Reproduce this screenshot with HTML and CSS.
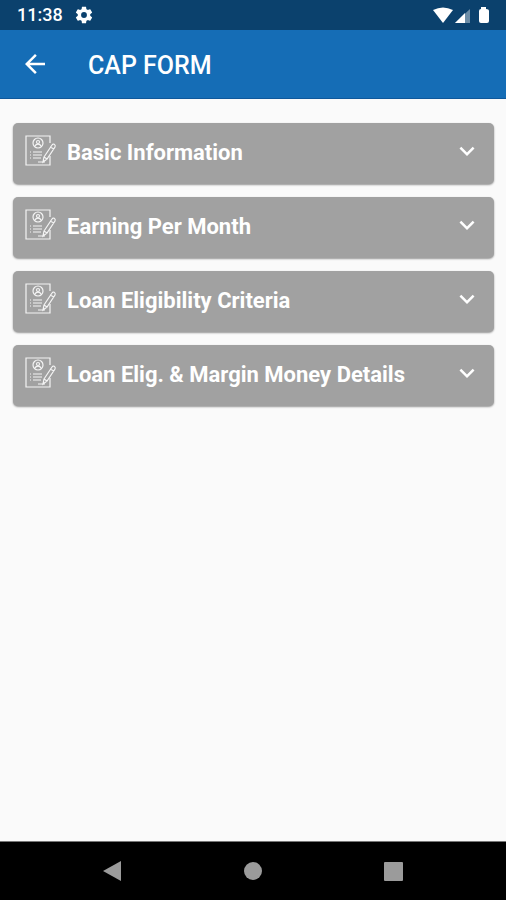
FILE: index.html
```html
<!DOCTYPE html>
<html lang="en">
<head>
  <meta charset="UTF-8">
  <meta name="viewport" content="width=device-width, initial-scale=1">
  <title>CAP FORM</title>
  <link rel="stylesheet" href="styles.css">
</head>

<body>

  <svg class="sprite" aria-hidden="true">
    <symbol id="icon-form" viewBox="0 0 32 32">
      <path d="M25 9V2H1v29h24v-9" />
      <circle cx="13" cy="9" r="5" />
      <circle cx="13" cy="8" r="1.5" />
      <path d="M10 12c1-2.500 5-2.500 6 0" />
      <path d="M5 18h1M8 18h9M5 21h1M8 21h9M5 24h1M8 24h8M13 28h7" />
      <path d="M19 23l8-12c1-2 4-.5 3 2l-8 12-4 3zM25 13l4 2M19 23l3 2" />
    </symbol>
    <symbol id="icon-chevron" viewBox="0 0 24 24">
      <path d="M7.410 8.590L12 13.170l4.590-4.580L18 10l-6 6-6-6z" />
    </symbol>
  </svg>

  <div class="status-bar">
    <span class="clock">11:38</span>
    <svg class="gear" viewBox="0 0 24 24" aria-hidden="true">
      <path d="M19.430 12.980c.04-.32.07-.64.07-.98s-.03-.66-.07-.98l2.110-1.650c.19-.15.24-.42.12-.64l-2-3.460c-.12-.22-.39-.3-.61-.22l-2.490 1c-.52-.4-1.080-.73-1.690-.98l-.38-2.650C14.460 2.180 14.250 2 14 2h-4c-.25 0-.46.18-.49.42l-.38 2.650c-.61.25-1.170.59-1.690.98l-2.490-1c-.23-.09-.49 0-.61.22l-2 3.460c-.13.22-.07.49.12.64l2.110 1.650c-.04.32-.07.65-.07.98s.03.66.07.98l-2.110 1.650c-.19.15-.24.42-.12.64l2 3.460c.12.22.39.3.61.22l2.490-1c.52.4 1.080.73 1.690.98l.38 2.650c.03.24.24.42.49.42h4c.25 0 .46-.18.49-.42l.38-2.650c.61-.25 1.170-.59 1.690-.98l2.490 1c.23.09.49 0 .61-.22l2-3.460c.12-.22.07-.49-.12-.64zM12 15.500a3.500 3.500 0 1 1 0-7 3.500 3.500 0 0 1 0 7z" />
    </svg>
    <svg class="signals" viewBox="0 0 60 18" aria-hidden="true">
      <path d="M1 4Q11-1 21 4L11 17z" />
      <path d="M38 3v14H23z" opacity=".4" />
      <path d="M33 7v10H23z" />
      <path d="M49 3V1h5v2q3 0 3 2v10q0 2-2 2h-6q-2 0-2-2V5q0-2 2-2z" />
    </svg>
  </div>

  <header class="app-bar">
    <a class="back" href="#" aria-label="Back">
      <svg viewBox="0 0 24 24" aria-hidden="true">
        <path d="M20 11H7.830l5.590-5.590L12 4l-8 8 8 8 1.410-1.410L7.830 13H20z" />
      </svg>
    </a>
    <h1>CAP FORM</h1>
  </header>

  <main class="sections">
    <button class="section" type="button" aria-expanded="false">
      <svg class="form-icon" aria-hidden="true"><use href="#icon-form" /></svg>
      <span class="label">Basic Information</span>
      <svg class="chevron" aria-hidden="true"><use href="#icon-chevron" /></svg>
    </button>
    <button class="section" type="button" aria-expanded="false">
      <svg class="form-icon" aria-hidden="true"><use href="#icon-form" /></svg>
      <span class="label">Earning Per Month</span>
      <svg class="chevron" aria-hidden="true"><use href="#icon-chevron" /></svg>
    </button>
    <button class="section" type="button" aria-expanded="false">
      <svg class="form-icon" aria-hidden="true"><use href="#icon-form" /></svg>
      <span class="label">Loan Eligibility Criteria</span>
      <svg class="chevron" aria-hidden="true"><use href="#icon-chevron" /></svg>
    </button>
    <button class="section" type="button" aria-expanded="false">
      <svg class="form-icon" aria-hidden="true"><use href="#icon-form" /></svg>
      <span class="label">Loan Elig. &amp; Margin Money Details</span>
      <svg class="chevron" aria-hidden="true"><use href="#icon-chevron" /></svg>
    </button>
  </main>

  <nav class="nav-bar">
    <button type="button" aria-label="Back">
      <svg viewBox="0 0 20 22" aria-hidden="true"><path d="M19 1v20L1 11z" /></svg>
    </button>
    <button type="button" aria-label="Home">
      <svg viewBox="0 0 20 22" aria-hidden="true"><circle cx="10" cy="11" r="9" /></svg>
    </button>
    <button type="button" aria-label="Recent apps">
      <svg viewBox="0 0 20 22" aria-hidden="true"><rect x="0" y="2" width="19" height="19" rx="1" /></svg>
    </button>
  </nav>

</body>
</html>
```

FILE: styles.css
```css
* {
  box-sizing: border-box;
}

body {
  margin: 0;
  min-height: 100vh;
  display: flex;
  flex-direction: column;
  background: #fafafa;
  color: #fff;
  font-family: Roboto, "Liberation Sans", sans-serif;
}

.sprite {
  display: none;
}

svg {
  display: block;
  fill: currentColor;
}

button {
  border: 0;
  font: inherit;
  color: inherit;
  cursor: pointer;
}

.status-bar {
  height: 30px;
  padding: 0 14px 0 17px;
  display: flex;
  align-items: center;
  background: #0b416d;
}

.clock {
  font-size: 18px;
  font-weight: 500;
  line-height: 32px;
}

.gear {
  width: 20px;
  height: 20px;
  margin-left: 11px;
}

.signals {
  width: 60px;
  height: 18px;
  margin-left: auto;
}

.app-bar {
  height: 69px;
  padding: 0 20px;
  display: flex;
  align-items: center;
  gap: 38px;
  background: #156db6;
  border-bottom: 1px solid #0f589b;
}

.back {
  color: inherit;
}

.back svg {
  width: 30px;
  height: 30px;
}

.app-bar h1 {
  margin: 0;
  padding-top: 4px;
  font-size: 25px;
  font-weight: 500;
  line-height: 32px;
}

.sections {
  flex: 1;
  padding: 24px 12px 24px 13px;
  display: flex;
  flex-direction: column;
  gap: 13px;
}

.section {
  width: 100%;
  height: 61px;
  padding: 11px 12px 0 12px;
  display: flex;
  align-items: flex-start;
  gap: 10px;
  background: #a1a1a1;
  border-radius: 5px;
  box-shadow: 0 1px 2px rgba(0, 0, 0, 0.4);
  text-align: left;
}

.form-icon {
  width: 32px;
  height: 32px;
  fill: none;
  stroke: #f4f4f4;
  stroke-width: 1.2;
}

.label {
  flex: 1;
  font-size: 22px;
  font-weight: 700;
  line-height: 38px;
}

.chevron {
  width: 30px;
  height: 34px;
}

.nav-bar {
  height: 59px;
  padding: 0 42px;
  display: flex;
  background: #000;
  border-top: 1px solid #777;
}

.nav-bar button {
  flex: 1;
  display: flex;
  align-items: center;
  justify-content: center;
  padding: 0;
  background: none;
  color: #9b9b9b;
}

.nav-bar svg {
  width: 20px;
  height: 22px;
}
```
